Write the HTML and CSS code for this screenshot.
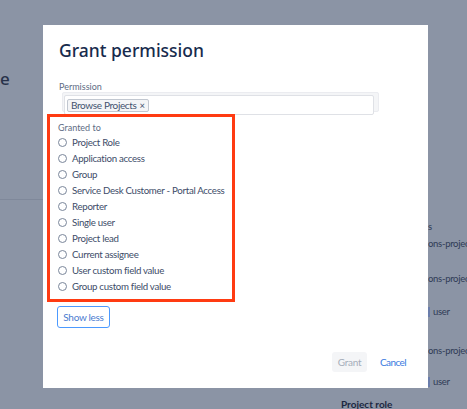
FILE: index.html
```html
<!DOCTYPE html>
<html>
<head>
<meta charset="utf-8">
<link rel="stylesheet" href="styles.css">
</head>
<body>
<div class="page">
  <div class="page-left">
    <div class="page-heading">e</div>
    <div class="page-rule"></div>
  </div>
  <div class="page-right">
    <div class="bg-row r1"><span class="frag">s</span></div>
    <div class="bg-row r2"><span class="frag">ons-projects-users</span></div>
    <div class="bg-row r3"><span class="frag">ons-projects-users</span></div>
    <div class="bg-row r4"><span class="frag"><span class="bg-link"></span>user</span></div>
    <div class="bg-row r5"><span class="frag">ons-projects-users</span></div>
    <div class="bg-row r6"><span class="frag"><span class="bg-link"></span>user</span></div>
    <div class="bg-row r7 bg-strong">Project role</div>
  </div>
</div>

<div class="modal">
  <h2 class="modal-title">Grant permission</h2>
  <div class="field-label">Permission</div>
  <div class="field">
    <div class="field-inner">
      <span class="tag">Browse Projects <span class="tag-x">×</span></span>
    </div>
  </div>
  <div class="granted">
    <div class="granted-label">Granted to</div>
    <label class="radio-row"><span class="radio"></span>Project Role</label>
    <label class="radio-row"><span class="radio"></span>Application access</label>
    <label class="radio-row"><span class="radio"></span>Group</label>
    <label class="radio-row"><span class="radio"></span>Service Desk Customer - Portal Access</label>
    <label class="radio-row"><span class="radio"></span>Reporter</label>
    <label class="radio-row"><span class="radio"></span>Single user</label>
    <label class="radio-row"><span class="radio"></span>Project lead</label>
    <label class="radio-row"><span class="radio"></span>Current assignee</label>
    <label class="radio-row"><span class="radio"></span>User custom field value</label>
    <label class="radio-row"><span class="radio"></span>Group custom field value</label>
  </div>
  <div class="show-less-wrap"><button class="btn-outline">Show less</button></div>
  <div class="modal-footer">
    <button class="btn-disabled">Grant</button>
    <button class="btn-link">Cancel</button>
  </div>
</div>
</body>
</html>
```

FILE: styles.css
```css
* { box-sizing: border-box; }
html, body {
  margin: 0;
  width: 467px;
  height: 409px;
  overflow: hidden;
}
body {
  background: #8b94a5;
  font-family: "Lato", "Noto Sans", sans-serif;
  letter-spacing: -0.3px;
  color: #172b4d;
  position: relative;
}
.page {
  display: flex;
  height: 409px;
}
.page-left {
  width: 300px;
  padding-top: 68px;
}
.page-heading {
  font-family: "Noto Sans", sans-serif;
  font-size: 17px;
  line-height: 22px;
  color: #27324a;
  font-weight: 500;
}
.page-rule {
  margin-top: 109px;
  height: 1px;
  background: #7f889a;
}
.page-right {
  margin-left: 41px;
  padding-top: 219px;
  width: 126px;
  white-space: nowrap;
  overflow: hidden;
  font-size: 9.5px;
  line-height: 16px;
  color: #2f3b55;
}
.bg-row .frag { display: inline-block; padding-left: 87px; }
.r2 { margin-top: 1px; }
.r3 { margin-top: 19px; }
.r4 { margin-top: 17px; }
.r5 { margin-top: 23px; }
.r6 { margin-top: 15px; }
.r7 { margin-top: 6px; }
.bg-strong { font-weight: 700; color: #1c2740; font-size: 10px; letter-spacing: 0; }
.bg-link {
  display: inline-block;
  width: 2px;
  height: 10px;
  background: #6a7dab;
  margin-right: 3px;
  vertical-align: -2px;
}

.modal {
  position: absolute;
  left: 43px;
  top: 25px;
  width: 385px;
  height: 363px;
  background: #fff;
  padding: 13px 16px 16px 16px;
  display: flex;
  flex-direction: column;
}
.modal-title {
  margin: 0;
  font-family: "Noto Sans", sans-serif;
  font-size: 17.5px;
  line-height: 24px;
  font-weight: 500;
  letter-spacing: 0;
  color: #172b4d;
}
.field-label {
  margin-top: 19px;
  font-size: 9px;
  line-height: 11px;
  letter-spacing: 0;
  color: #5e6c84;
}
.field {
  margin: 0 33px 0 3px;
  height: 20px;
  background: #f4f5f7;
  border: 1px solid #ebecf0;
  border-radius: 2px;
}
.field-inner {
  margin: 2px 4px 0 1px;
  height: 20px;
  background: #fff;
  border: 1px solid #dfe1e6;
  border-radius: 2px;
  display: flex;
  align-items: center;
  padding-left: 2px;
}
.tag {
  display: inline-flex;
  align-items: center;
  height: 13px;
  padding: 0 3px;
  background: #f4f5f7;
  border: 1px solid #c1c7d0;
  border-radius: 2px;
  font-size: 10px;
  letter-spacing: -0.35px;
  color: #42526e;
  line-height: 11px;
}
.tag-x { margin-left: 3px; font-size: 9.5px; }

.granted {
  margin: 2px 0 0 -12px;
  width: 188px;
  border: 3px solid #ff3b12;
  padding: 5px 0 5px 8px;
}
.granted-label {
  font-size: 9px;
  line-height: 12px;
  letter-spacing: 0;
  color: #5e6c84;
}
.radio-row {
  display: flex;
  align-items: center;
  height: 16px;
  font-size: 9.7px;
  color: #3d4c68;
  white-space: nowrap;
}
.radio {
  width: 9px;
  height: 9px;
  border: 1px solid #7a869a;
  border-radius: 50%;
  margin-right: 5px;
  flex: none;
}
.show-less-wrap { margin: 3px 0 0 -2px; }
.btn-outline {
  height: 22px;
  width: 53px;
  padding: 0;
  background: #fff;
  border: 1px solid #4c9aff;
  border-radius: 3px;
  color: #4a7bd0;
  font-family: inherit;
  letter-spacing: inherit;
  font-size: 10px;
}
.modal-footer {
  margin-top: auto;
  display: flex;
  justify-content: flex-end;
  align-items: center;
}
.btn-disabled {
  height: 20px;
  width: 35px;
  padding: 0;
  border: none;
  border-radius: 3px;
  background: #f4f5f7;
  color: #a5adba;
  font-family: inherit;
  letter-spacing: inherit;
  font-size: 10px;
}
.btn-link {
  margin-left: 7px;
  height: 20px;
  padding: 0 6px;
  border: none;
  background: none;
  color: #3a7ae0;
  font-family: inherit;
  letter-spacing: -0.6px;
  font-size: 10px;
}
```
